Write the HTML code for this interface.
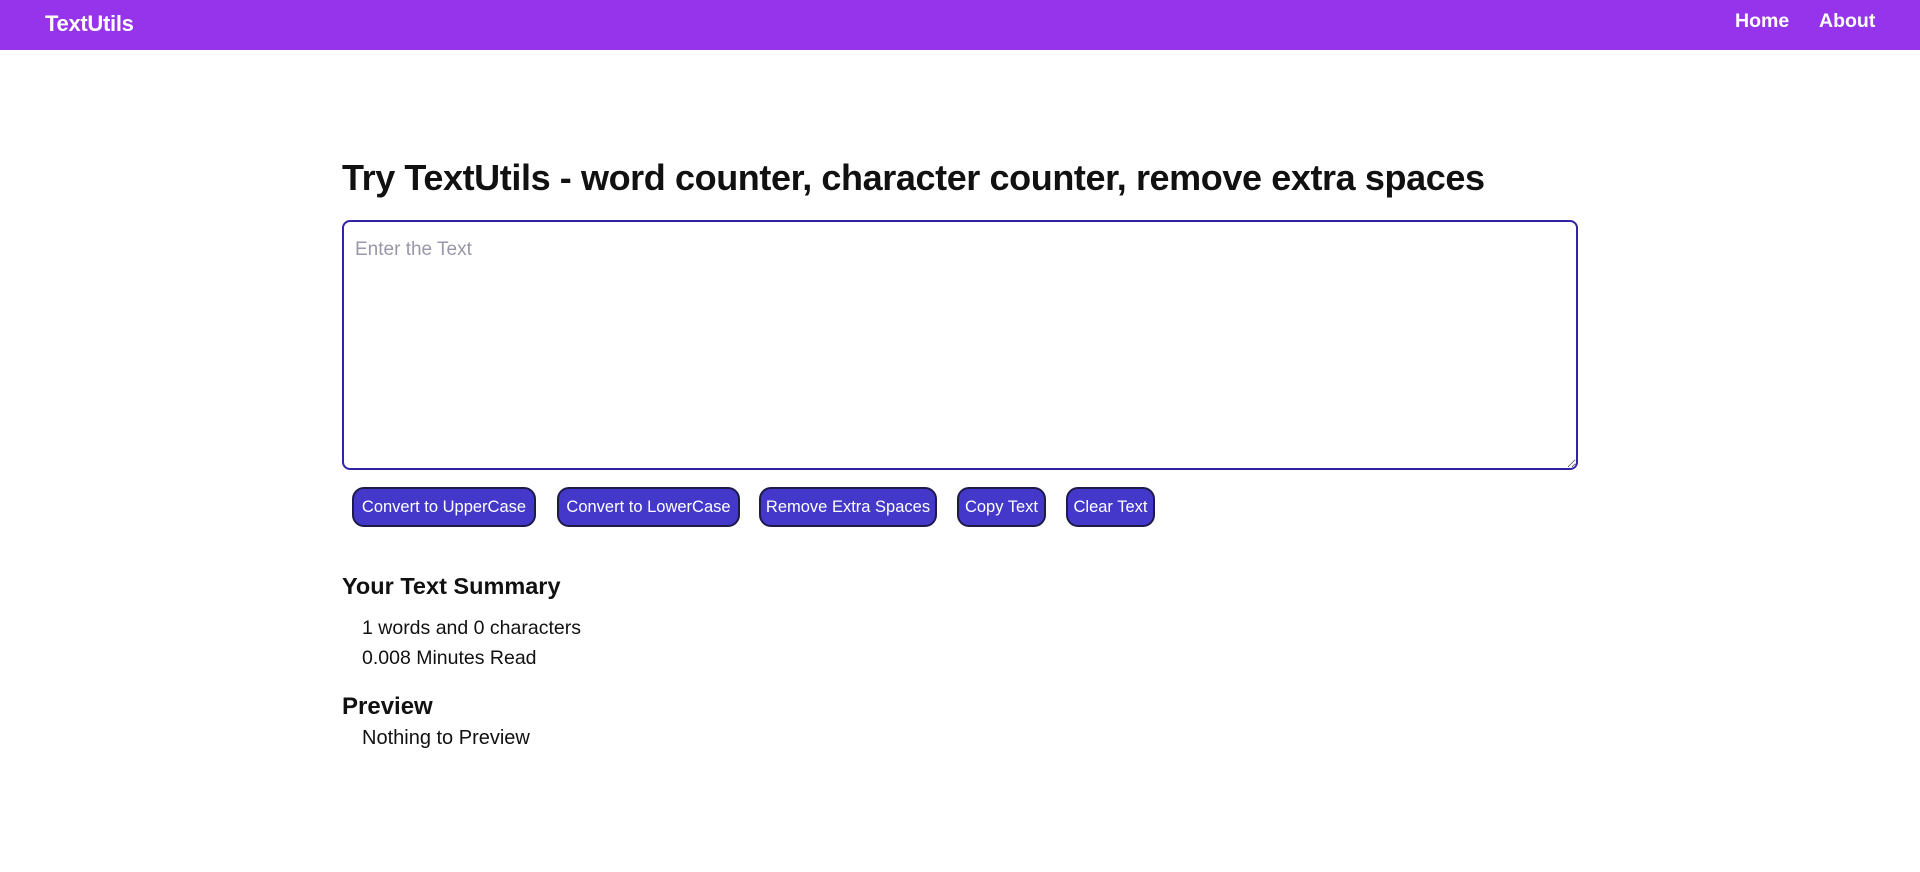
<!DOCTYPE html>
<html><head><meta charset="utf-8"><style>
*{box-sizing:border-box;margin:0;padding:0}
body{width:1920px;height:872px;background:#fff;font-family:"Liberation Sans",sans-serif;color:#212529;position:relative;overflow:hidden}
.nav{position:absolute;left:0;top:0;width:1920px;height:50px;background:#9534eb}
.nav span{position:absolute;color:#fff;font-weight:bold;top:11px}
.a{position:absolute;white-space:nowrap}
textarea{position:absolute;left:342px;top:220px;width:1236px;height:250px;border:2px solid #2f24a6;border-radius:8px;padding:17px 11px;font:19px "Liberation Sans",sans-serif;resize:vertical;outline:none}
textarea::placeholder{color:#9a97a8}
.b{position:absolute;top:487px;height:40px;background:#4338ca;border:2px solid #1e1b4b;border-radius:12px;color:#fff;font-size:16.5px;display:flex;align-items:center;justify-content:center;white-space:nowrap}
</style></head><body>
<div class="nav">
<span style="left:45px;font-size:22px;top:11px;letter-spacing:-0.3px">TextUtils</span>
<span style="left:1735px;font-size:19.5px;top:10px">Home</span>
<span style="left:1819px;font-size:19.5px;top:10px">About</span>
</div>
<div class="a" style="left:342px;top:157px;font-size:36px;font-weight:bold;color:#111;letter-spacing:-0.4px">Try TextUtils - word counter, character counter, remove extra spaces</div>
<textarea placeholder="Enter the Text"></textarea>
<div class="b" style="left:352px;width:184px">Convert to UpperCase</div>
<div class="b" style="left:557px;width:183px">Convert to LowerCase</div>
<div class="b" style="left:759px;width:178px">Remove Extra Spaces</div>
<div class="b" style="left:957px;width:89px">Copy Text</div>
<div class="b" style="left:1066px;width:89px">Clear Text</div>
<div class="a" style="left:342px;top:573px;font-size:23.5px;font-weight:bold;color:#111">Your Text Summary</div>
<div class="a" style="left:362px;top:617px;font-size:19.5px;color:#111">1 words and 0 characters</div>
<div class="a" style="left:362px;top:647px;font-size:19.5px;color:#111">0.008 Minutes Read</div>
<div class="a" style="left:342px;top:693px;font-size:24px;font-weight:bold;color:#111">Preview</div>
<div class="a" style="left:362px;top:727px;font-size:20px;color:#111">Nothing to Preview</div>
</body></html>
